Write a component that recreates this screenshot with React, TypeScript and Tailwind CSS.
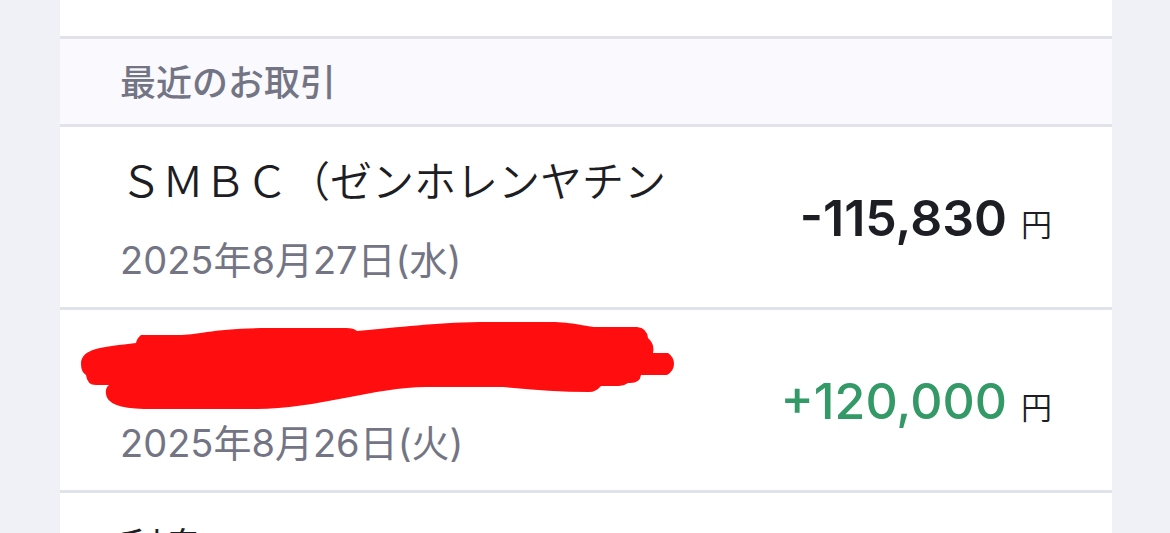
import type { ReactNode } from 'react';

type Transaction = {
  id: string;
  title: string;
  hidden?: boolean;
  date: string;
  iso: string;
  amount: string;
  income?: boolean;
};

const transactions: Transaction[] = [
  { id: 't1', title: 'ＳＭＢＣ（ゼンホレンヤチン', date: '2025年8月27日(水)', iso: '2025-08-27', amount: '-115,830' },
  { id: 't2', title: '', hidden: true, date: '2025年8月26日(火)', iso: '2025-08-26', amount: '+120,000', income: true },
];

function Scribble() {
  return (
    <svg
      aria-hidden="true"
      viewBox="0 0 594 88"
      className="absolute top-3 left-[21px] h-[88px] w-[594px]"
      fill="#ff0d0f"
    >
      <path d="M60 13H98C115 13 135 6 188 6H265Q273 6 276 9C322 5 350 1 399 0H470C491 0 508 5 514 5H556Q566 6 567 16Q574 22 572 31H587Q593 35 593 42Q593 49 586 53H560Q559 61 549 61H547Q543 64 538 64H520Q515 70 508 70C480 70 450 68 422 65H345C295 65 235 87 175 87H63Q26 86 25 72Q24 66 28 63H15Q6 63 5 53Q0 50 0 42C0 26 22 25 55 21Q56 16 60 13Z" />
    </svg>
  );
}

function Amount({ children, income }: { children: ReactNode; income?: boolean }) {
  return (
    <p className="flex shrink-0 items-baseline gap-[14px] pb-1 text-[31px] font-[350]">
      <span className={income ? 'text-[50px] font-medium text-[#339966]' : 'text-[50px] font-semibold text-[#1d1d24]'}>
        {children}
      </span>
      円
    </p>
  );
}

export default function App() {
  return (
    <div className="h-screen overflow-hidden bg-[#eff1f7] px-[60px] font-[Inter,'Noto_Sans_CJK_JP',sans-serif] text-[#1d1d24] max-md:px-4 md:pr-[58px]">
      <main className="min-h-full bg-white pt-9">
        <h2 className="border-y-[3px] border-[#e2e2ea] bg-[#f9f9fe] px-[60px] pt-[18px] pb-[14px] text-[36px] leading-[53px] font-medium text-[#737584]">
          最近のお取引
        </h2>
        <ul>
          {transactions.map((t) => (
            <li
              key={t.id}
              className="relative flex items-center justify-between border-b-[3px] border-[#e2e2ea] px-[60px] pt-[25px] pb-[19px]"
            >
              <div>
                <h3 className="h-[60px] text-[42px] leading-[60px] font-[350]">{t.title}</h3>
                <time dateTime={t.iso} className="mt-5 block text-[38px] leading-[56px] font-[390] text-[#737584]">
                  {t.date}
                </time>
              </div>
              <Amount income={t.income}>{t.amount}</Amount>
              {t.hidden && <Scribble />}
            </li>
          ))}
          <li className="px-[60px] pt-[26px]">
            <h3 className="text-[42px] leading-[60px] font-[350]">利息</h3>
          </li>
        </ul>
      </main>
    </div>
  );
}
